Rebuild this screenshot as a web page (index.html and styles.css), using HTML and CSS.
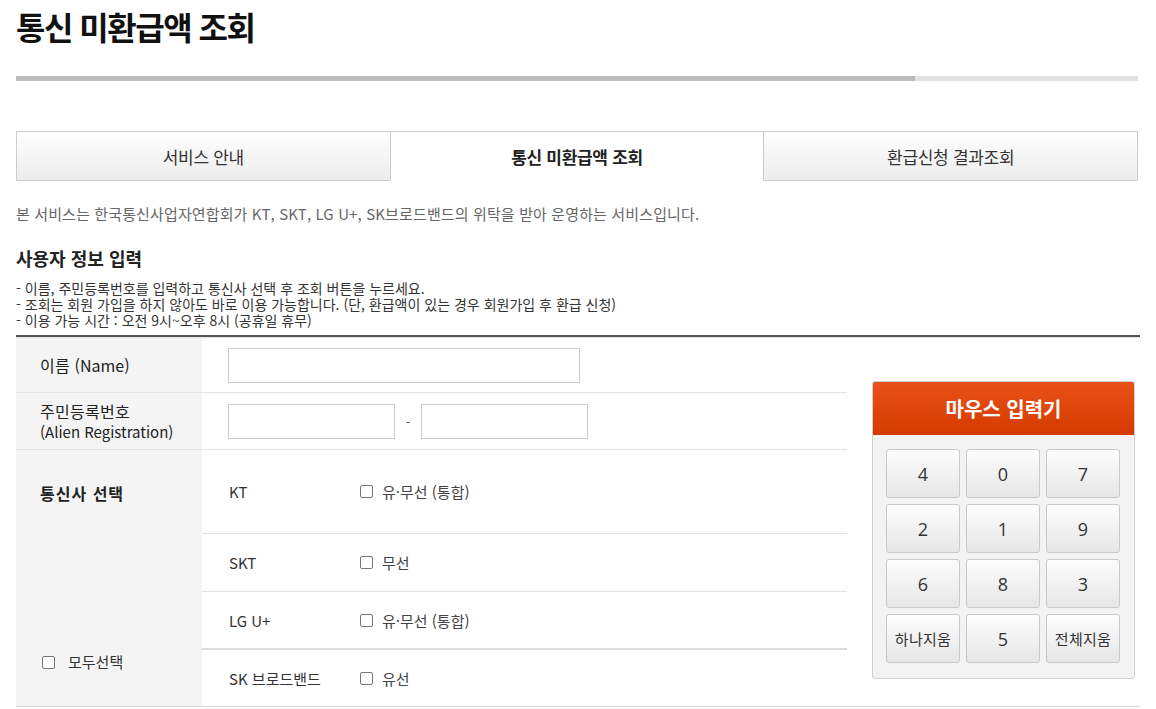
FILE: index.html
```html
<!DOCTYPE html>
<html lang="ko">
<head>
<meta charset="utf-8">
<title>통신 미환급액 조회</title>
<link rel="stylesheet" href="styles.css">
</head>
<body>
<div class="page">
  <h1 class="title">통신 미환급액 조회</h1>
  <div class="progress"><div class="progress-fill"></div></div>
  <ul class="tabs">
    <li class="tab">서비스 안내</li>
    <li class="tab active">통신 미환급액 조회</li>
    <li class="tab">환급신청 결과조회</li>
  </ul>
  <p class="desc">본 서비스는 한국통신사업자연합회가 KT, SKT, LG U+, SK브로드밴드의 위탁을 받아 운영하는 서비스입니다.</p>
  <h2 class="section">사용자 정보 입력</h2>
  <ul class="notes">
    <li>- 이름, 주민등록번호를 입력하고 통신사 선택 후 조회 버튼을 누르세요.</li>
    <li>- 조회는 회원 가입을 하지 않아도 바로 이용 가능합니다. (단, 환급액이 있는 경우 회원가입 후 환급 신청)</li>
    <li>- 이용 가능 시간 : 오전 9시~오후 8시 (공휴일 휴무)</li>
  </ul>
  <div class="form-wrap">
    <div class="form">
      <div class="row row-name">
        <div class="label"><span class="name-label"><span class="ko">이름</span> (Name)</span></div>
        <div class="field"><input class="inp inp-name" type="text"></div>
      </div>
      <div class="row row-reg">
        <div class="label"><span class="ko">주민등록번호</span><br><span class="en">(Alien Registration)</span></div>
        <div class="field"><input class="inp inp-reg" type="text"><span class="dash">-</span><input class="inp inp-reg" type="text"></div>
      </div>
      <div class="row row-carrier">
        <div class="label label-carrier">
          <span class="carrier-title">통신사 선택</span>
          <span class="all"><span class="cb"></span>모두선택</span>
        </div>
        <div class="carriers">
          <div class="carrier c-kt"><span class="cname">KT</span><span class="opt"><span class="cb"></span>유·무선 (통합)</span></div>
          <div class="carrier c-skt"><span class="cname">SKT</span><span class="opt"><span class="cb"></span>무선</span></div>
          <div class="carrier c-lg"><span class="cname">LG U+</span><span class="opt"><span class="cb"></span>유·무선 (통합)</span></div>
          <div class="carrier c-sk"><span class="cname">SK 브로드밴드</span><span class="opt"><span class="cb"></span>유선</span></div>
        </div>
      </div>
    </div>
    <div class="keypad-cell">
      <div class="keypad">
        <div class="keypad-head">마우스 입력기</div>
        <div class="keypad-body">
          <div class="key">4</div><div class="key">0</div><div class="key">7</div>
          <div class="key">2</div><div class="key">1</div><div class="key">9</div>
          <div class="key">6</div><div class="key">8</div><div class="key">3</div>
          <div class="key key-text">하나지움</div><div class="key">5</div><div class="key key-text">전체지움</div>
        </div>
      </div>
    </div>
  </div>
</div>
</body>
</html>
```
FILE: styles.css
```css
* { box-sizing: border-box; }
html, body { margin: 0; padding: 0; background: #fff; }
body {
  font-family: "Noto Sans CJK KR", "Noto Sans", sans-serif;
  color: #333;
}
.page { padding: 0 16px; width: 1156px; }

.title {
  margin: 0;
  padding-top: 6px;
  font-size: 32px;
  line-height: 40px;
  font-weight: 700;
  letter-spacing: -1.5px;
  color: #111;
}

.progress {
  margin-top: 30px;
  width: 1122px;
  height: 5px;
  background: #e2e2e2;
}
.progress-fill { width: 899px; height: 5px; background: #bbbbbb; }

.tabs {
  list-style: none;
  margin: 50px 0 0;
  padding: 0;
  display: flex;
  width: 1122px;
}
.tab {
  flex: 1;
  height: 50px;
  border: 1px solid #cccccc;
  background: linear-gradient(#ffffff, #ececec);
  display: flex;
  align-items: center;
  justify-content: center;
  font-size: 17px;
  color: #333;
  letter-spacing: -0.3px;
}
.tab + .tab { margin-left: -1px; }
.tab.active {
  background: #fff;
  border-bottom-color: #fff;
  font-weight: 700;
  color: #222;
}

.desc {
  margin: 23px 0 0;
  font-size: 15px;
  line-height: 20px;
  color: #666;
  letter-spacing: 0.13px;
}

.section {
  margin: 22px 0 0;
  font-size: 18px;
  line-height: 24px;
  font-weight: 700;
  color: #222;
}

.notes {
  list-style: none;
  margin: 10px 0 0;
  padding: 0;
  font-size: 14px;
  line-height: 16px;
  color: #333;
}

.form-wrap {
  margin-top: 7px;
  display: grid;
  grid-template-columns: 831px 1fr;
  border-top: 2px solid #555;
  border-bottom: 1px solid #d6d6d6;
  box-shadow: inset 0 1px 0 #e4e4e4;
}
.form { padding-top: 1px; }
.row {
  display: grid;
  grid-template-columns: 186px 1fr;
  border-bottom: 1px solid #e2e2e2;
}
.row-name { height: 55px; }
.row-reg { height: 57px; }
.row-carrier { border-bottom: 0; }

.label {
  background: #f4f4f4;
  padding-left: 24px;
  font-size: 15px;
  line-height: 20px;
  color: #222;
  display: flex;
  flex-direction: column;
  justify-content: center;
}
.label .ko { font-size: 16px; letter-spacing: 0.3px; }
.name-label { font-size: 16px; }
.row-reg .label { display: block; padding-top: 8px; }

.field {
  display: flex;
  align-items: center;
  padding-left: 26px;
}
.inp {
  height: 35px;
  border: 1px solid #cccccc;
  background: #fff;
  margin: 0;
  padding: 0 8px;
  font: inherit;
}
.inp-name { width: 352px; }
.inp-reg { width: 167px; }
.dash { width: 26px; text-align: center; font-size: 13px; color: #555; }

.label-carrier {
  justify-content: space-between;
  padding: 33px 0 34px 24px;
}
.carrier-title { font-weight: 700; font-size: 16px; letter-spacing: 1px; }
.all { display: flex; align-items: center; font-size: 15px; color: #333; }
.all .cb { margin: 0 13px 0 2px; }

.cb {
  display: inline-block;
  width: 13px;
  height: 13px;
  border: 1px solid #777;
  border-radius: 2px;
  background: #fff;
  flex: none;
}

.carriers { display: flex; flex-direction: column; }
.carrier {
  display: flex;
  align-items: center;
  padding-left: 27px;
  border-bottom: 1px solid #e2e2e2;
  font-size: 15px;
  color: #333;
}
.c-kt { height: 84px; }
.c-skt { height: 58px; }
.c-lg { height: 58px; border-bottom: 2px solid #dcdcdc; }
.c-sk { height: 56px; border-bottom: 0; }
.cname { width: 131px; }
.opt { display: flex; align-items: center; color: #444; }
.opt .cb { margin-right: 9px; }

.keypad-cell { padding: 44px 5px 0 25px; }
.keypad {
  width: 263px;
  height: 298px;
  border: 1px solid #cfcfcf;
  border-radius: 3px;
  background: #f3f3f3;
  overflow: hidden;
}
.keypad-head {
  height: 54px;
  margin: -1px -1px 0;
  border-radius: 3px 3px 0 0;
  background: linear-gradient(#e9521a, #d43a00);
  color: #fff;
  font-size: 20px;
  font-weight: 700;
  display: flex;
  align-items: center;
  justify-content: center;
}
.keypad-body {
  display: grid;
  grid-template-columns: repeat(3, 74px);
  grid-auto-rows: 49px;
  gap: 6px;
  padding: 14px 0 0 13px;
}
.key {
  border: 1px solid #c9c9c9;
  border-radius: 3px;
  background: linear-gradient(#fdfdfd, #e6e6e6);
  display: flex;
  align-items: center;
  justify-content: center;
  font-family: "Open Sans", "Noto Sans CJK KR", sans-serif;
  font-size: 18px;
  color: #333;
}
.key-text { font-family: "Noto Sans CJK KR", sans-serif; font-size: 15px; letter-spacing: 0.3px; }
```
